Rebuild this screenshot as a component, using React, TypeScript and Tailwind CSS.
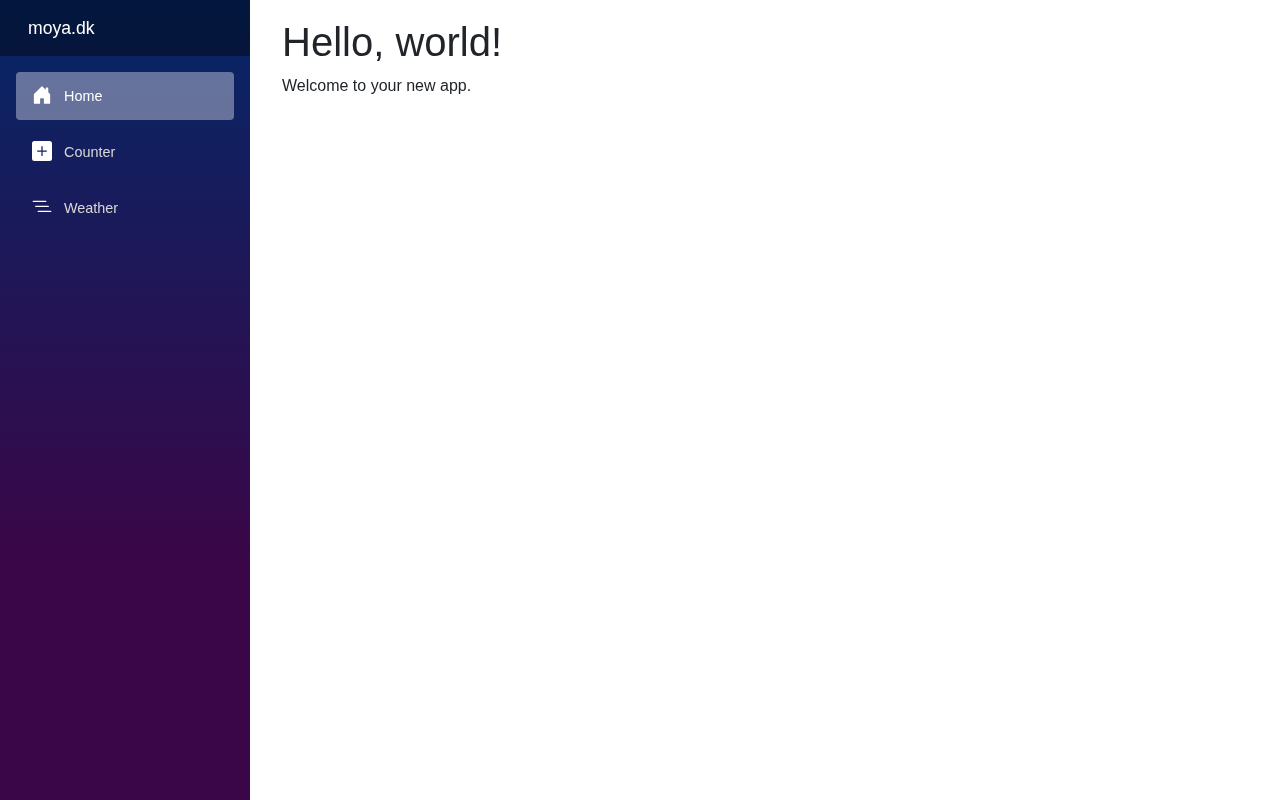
import React from 'react';

function HouseIcon() {
  return (
    <svg viewBox="0 0 16 16" fill="white" className="w-5 h-5 shrink-0 mr-3 relative -top-px">
      <path d="M6.5 14.5v-3.505c0-.245.25-.495.5-.495h2c.25 0 .5.25.5.5v3.5a.5.5 0 0 0 .5.5h4a.5.5 0 0 0 .5-.5v-7a.5.5 0 0 0-.146-.354L13 5.793V2.5a.5.5 0 0 0-.5-.5h-1a.5.5 0 0 0-.5.5v1.293L8.354 1.146a.5.5 0 0 0-.708 0l-6 6A.5.5 0 0 0 1.5 7.5v7a.5.5 0 0 0 .5.5h4a.5.5 0 0 0 .5-.5Z" />
    </svg>
  );
}

function PlusIcon() {
  return (
    <svg viewBox="0 0 16 16" fill="white" className="w-5 h-5 shrink-0 mr-3 relative -top-px">
      <path d="M2 0a2 2 0 0 0-2 2v12a2 2 0 0 0 2 2h12a2 2 0 0 0 2-2V2a2 2 0 0 0-2-2H2zm6.5 4.5v3h3a.5.5 0 0 1 0 1h-3v3a.5.5 0 0 1-1 0v-3h-3a.5.5 0 0 1 0-1h3v-3a.5.5 0 0 1 1 0z" />
    </svg>
  );
}

function ListIcon() {
  return (
    <svg viewBox="0 0 16 16" fill="white" className="w-5 h-5 shrink-0 mr-3 relative -top-px">
      <path
        fillRule="evenodd"
        d="M4.5 11.5A.5.5 0 0 1 5 11h10a.5.5 0 0 1 0 1H5a.5.5 0 0 1-.5-.5zm-2-4A.5.5 0 0 1 3 7h10a.5.5 0 0 1 0 1H3a.5.5 0 0 1-.5-.5zm-2-4A.5.5 0 0 1 1 3h10a.5.5 0 0 1 0 1H1a.5.5 0 0 1-.5-.5z"
      />
    </svg>
  );
}

export default function App() {
  return (
    <div className="flex min-h-screen will-change-transform bg-white font-['Liberation_Sans',Arial,sans-serif] text-[#212529]">
      <aside className="w-[250px] h-screen shrink-0 bg-[linear-gradient(180deg,#052767_0%,#3a0647_70%)]">
        <div className="h-14 pl-7 bg-black/40 text-[17.6px] leading-[56px] text-white">moya.dk</div>
        <nav className="flex flex-col gap-2 px-4 pt-4 text-[14.4px]">
          <a href="#home" className="flex items-center h-12 px-4 rounded leading-[48px] bg-white/[0.37] text-white">
            <HouseIcon />
            Home
          </a>
          <a href="#counter" className="flex items-center h-12 px-4 rounded leading-[48px] text-[#d7d7d7]">
            <PlusIcon />
            Counter
          </a>
          <a href="#weather" className="flex items-center h-12 px-4 rounded leading-[48px] text-[#d7d7d7]">
            <ListIcon />
            Weather
          </a>
        </nav>
      </aside>
      <main className="flex-1 pl-8 pt-[18px]">
        <h1 className="text-[40px] leading-[48px] mb-2">Hello, world!</h1>
        <p className="text-base leading-6">Welcome to your new app.</p>
      </main>
    </div>
  );
}
